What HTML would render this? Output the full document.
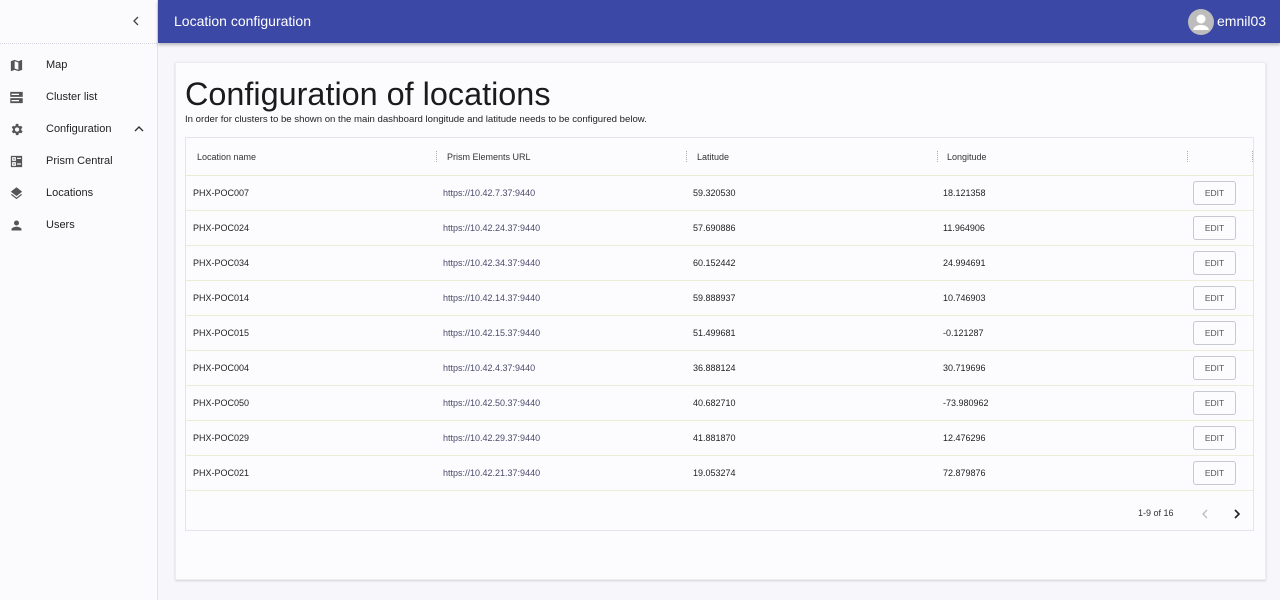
<!DOCTYPE html>
<html><head><style>
*{box-sizing:border-box;margin:0;padding:0}
body{width:1280px;height:600px;font-family:"Liberation Sans",sans-serif;background:#f7f7fb;position:relative;overflow:hidden;color:#222}
.side{position:absolute;left:0;top:0;width:158px;height:600px;background:#fbfbfd;border-right:1px solid #e2e2ea}
.side .top{height:44px;border-bottom:1px dotted #d8d8e4;position:relative}
.item{position:absolute;left:0;height:32px;width:158px;font-size:11px;color:#222}
.item span{position:absolute;left:46px;top:10px}
.item svg{position:absolute;left:9px;top:9px}
.hdr{position:absolute;left:158px;top:0;width:1122px;height:43px;background:#3c48a5;color:#fff;box-shadow:0 2px 3px rgba(0,0,0,.25)}
.hdr .t{position:absolute;left:16px;top:13px;font-size:14px}
.av{position:absolute;left:1030px;top:9px;width:26px;height:26px;border-radius:50%;background:#bdbdbd;overflow:hidden}
.user{position:absolute;left:1059px;top:13px;font-size:14px}
.card{position:absolute;left:175px;top:62px;width:1091px;height:518px;background:#fcfcfe;border:1px solid #ececf2;box-shadow:0 1px 2px rgba(0,0,0,.15)}
h1{position:absolute;left:9px;top:13px;font-weight:normal;font-size:32.4px;color:#1b1b1b}
.sub{position:absolute;left:9px;top:51px;font-size:9.6px;color:#222}
.tbl{position:absolute;left:9px;top:74px;width:1069px;height:394px;border:1px solid #e4e4ee;background:#fcfcfe}
.th{position:absolute;top:0;height:38px;left:0;right:0;border-bottom:1px solid #ebebd0;font-size:9px;color:#333}
.th span{position:absolute;top:14px}
.sep{position:absolute;top:13px;width:1px;height:11px;border-left:1px dotted #aaa}
.row{position:absolute;left:0;right:0;height:35px;border-bottom:1px solid #ececd8;font-size:9px}
.row span{position:absolute;top:12px}
.url{color:#4a4a6a}
.btn{position:absolute;left:1007px;top:5px;width:43px;height:24px;border:1px solid #c8c8d4;border-radius:3px;font-size:8.5px;color:#555;text-align:center;line-height:22px}
.pg{position:absolute;top:370px;font-size:9px;color:#333}
</style></head><body>
<div class="side">
<div class="top"><svg style="position:absolute;left:131px;top:16px" width="10" height="10" viewBox="0 0 10 10"><path d="M7 1L3 5l4 4" fill="none" stroke="#444" stroke-width="1.3"/></svg></div>
<div class="item" style="top:49px"><svg width="15" height="15" viewBox="0 0 24 24"><path fill="#555" d="M20.5 3l-.16.03L15 5.1 9 3 3.36 4.9c-.21.07-.36.25-.36.48V20.5c0 .28.22.5.5.5l.16-.03L9 18.9l6 2.1 5.64-1.9c.21-.07.36-.25.36-.48V3.5c0-.28-.22-.5-.5-.5zM15 19l-6-2.11V5l6 2.11V19z"/></svg><span>Map</span></div>
<div class="item" style="top:81px"><svg width="15" height="15" viewBox="0 0 24 24"><path fill="#555" d="M2 3h20v8H2zM2 13h20v8H2z"/><path fill="#fff" d="M4 6h12v2H4zM4 16h12v2H4z"/></svg><span>Cluster list</span></div>
<div class="item" style="top:113px"><svg width="15" height="15" viewBox="0 0 24 24"><path fill="#555" d="M19.4 13a7.5 7.5 0 000-2l2.1-1.6-2-3.5-2.5 1a7 7 0 00-1.7-1L14.9 3h-4l-.4 2.9a7 7 0 00-1.7 1l-2.5-1-2 3.5L6.6 11a7.5 7.5 0 000 2l-2.1 1.6 2 3.5 2.5-1a7 7 0 001.7 1l.4 2.9h4l.4-2.9a7 7 0 001.7-1l2.5 1 2-3.5zM12.9 15.5a3.5 3.5 0 110-7 3.5 3.5 0 010 7z"/></svg><span>Configuration</span><svg style="left:134px;top:12px" width="10" height="8" viewBox="0 0 10 8"><path d="M1 6l4-4 4 4" fill="none" stroke="#333" stroke-width="1.4"/></svg></div>
<div class="item" style="top:145px"><svg width="15" height="15" viewBox="0 0 24 24"><path fill="#555" d="M3 3h18v18H3z"/><path fill="#fff" d="M5 5h6v6H5zM13 6h6v2h-6zM5 13h6v6H5zM13 15h6v2h-6z"/><path fill="#555" d="M7 7h2v2H7zM7 15h2v2H7z"/></svg><span>Prism Central</span></div>
<div class="item" style="top:177px"><svg width="15" height="15" viewBox="0 0 24 24"><path fill="#555" d="M12 16l7.4-5.7L21 9l-9-7-9 7 1.6 1.3zM12 18.5l-7.4-5.7L3 14l9 7 9-7-1.6-1.3z"/></svg><span>Locations</span></div>
<div class="item" style="top:209px"><svg width="15" height="15" viewBox="0 0 24 24"><path fill="#555" d="M12 12a4 4 0 100-8 4 4 0 000 8zm0 2c-2.7 0-8 1.3-8 4v2h16v-2c0-2.7-5.3-4-8-4z"/></svg><span>Users</span></div>
</div>
<div class="hdr"><div class="t">Location configuration</div>
<div class="av"><svg width="26" height="26" viewBox="0 0 26 26"><circle cx="13" cy="10" r="4.5" fill="#fff"/><path d="M5 21c1-4 5-5 8-5s7 1 8 5z" fill="#fff"/></svg></div>
<div class="user">emnil03</div></div>
<div class="card">
<h1>Configuration of locations</h1>
<div class="sub">In order for clusters to be shown on the main dashboard longitude and latitude needs to be configured below.</div>
<div class="tbl">
<div class="th"><span style="left:11px">Location name</span><div class="sep" style="left:250px"></div><span style="left:261px">Prism Elements URL</span><div class="sep" style="left:500px"></div><span style="left:511px">Latitude</span><div class="sep" style="left:751px"></div><span style="left:761px">Longitude</span><div class="sep" style="left:1001px"></div><div class="sep" style="left:1066px"></div></div>
<div class="row" style="top:38px"><span style="left:7px">PHX-POC007</span><span class="url" style="left:257px">https://10.42.7.37:9440</span><span style="left:507px">59.320530</span><span style="left:757px">18.121358</span><div class="btn">EDIT</div></div>
<div class="row" style="top:73px"><span style="left:7px">PHX-POC024</span><span class="url" style="left:257px">https://10.42.24.37:9440</span><span style="left:507px">57.690886</span><span style="left:757px">11.964906</span><div class="btn">EDIT</div></div>
<div class="row" style="top:108px"><span style="left:7px">PHX-POC034</span><span class="url" style="left:257px">https://10.42.34.37:9440</span><span style="left:507px">60.152442</span><span style="left:757px">24.994691</span><div class="btn">EDIT</div></div>
<div class="row" style="top:143px"><span style="left:7px">PHX-POC014</span><span class="url" style="left:257px">https://10.42.14.37:9440</span><span style="left:507px">59.888937</span><span style="left:757px">10.746903</span><div class="btn">EDIT</div></div>
<div class="row" style="top:178px"><span style="left:7px">PHX-POC015</span><span class="url" style="left:257px">https://10.42.15.37:9440</span><span style="left:507px">51.499681</span><span style="left:757px">-0.121287</span><div class="btn">EDIT</div></div>
<div class="row" style="top:213px"><span style="left:7px">PHX-POC004</span><span class="url" style="left:257px">https://10.42.4.37:9440</span><span style="left:507px">36.888124</span><span style="left:757px">30.719696</span><div class="btn">EDIT</div></div>
<div class="row" style="top:248px"><span style="left:7px">PHX-POC050</span><span class="url" style="left:257px">https://10.42.50.37:9440</span><span style="left:507px">40.682710</span><span style="left:757px">-73.980962</span><div class="btn">EDIT</div></div>
<div class="row" style="top:283px"><span style="left:7px">PHX-POC029</span><span class="url" style="left:257px">https://10.42.29.37:9440</span><span style="left:507px">41.881870</span><span style="left:757px">12.476296</span><div class="btn">EDIT</div></div>
<div class="row" style="top:318px"><span style="left:7px">PHX-POC021</span><span class="url" style="left:257px">https://10.42.21.37:9440</span><span style="left:507px">19.053274</span><span style="left:757px">72.879876</span><div class="btn">EDIT</div></div>
<div class="pg" style="left:952px">1-9 of 16</div>
<svg style="position:absolute;left:1015px;top:371px" width="8" height="10" viewBox="0 0 8 10"><path d="M6 1L2 5l4 4" fill="none" stroke="#bbb" stroke-width="1.3"/></svg>
<svg style="position:absolute;left:1047px;top:371px" width="8" height="10" viewBox="0 0 8 10"><path d="M2 1l4 4-4 4" fill="none" stroke="#222" stroke-width="1.6"/></svg>
</div>
</div>
</body></html>
